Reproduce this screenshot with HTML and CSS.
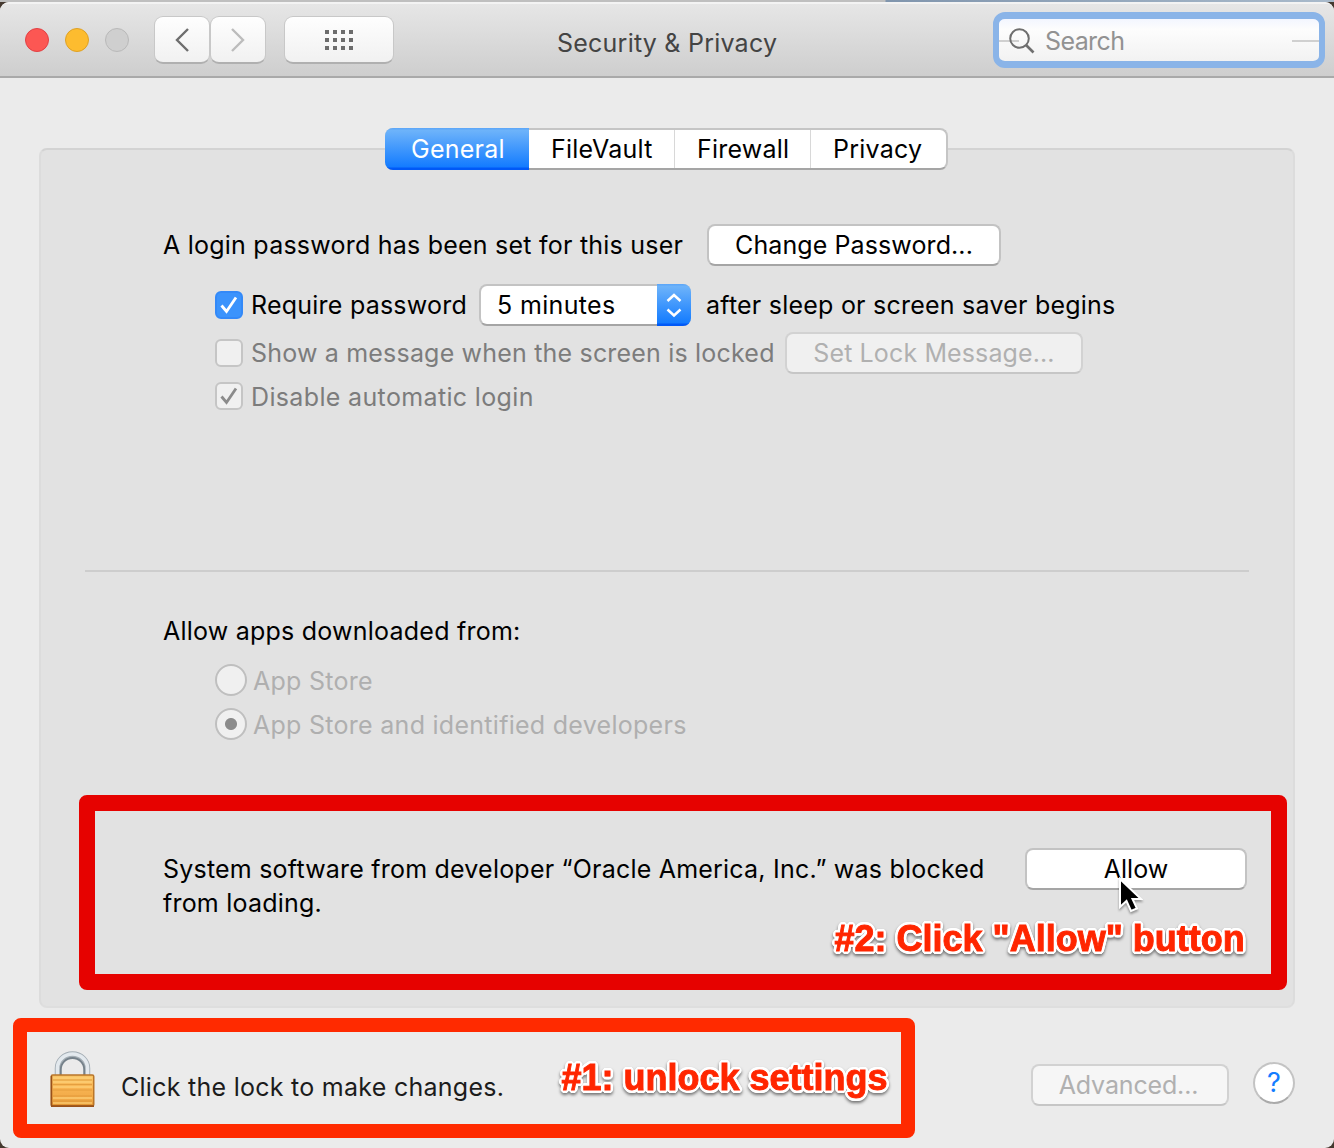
FILE: index.html
```html
<!DOCTYPE html>
<html lang="en">
<head>
<meta charset="utf-8">
<title>Security &amp; Privacy</title>
<link rel="stylesheet" href="styles.css">
</head>
<body>
<div class="desktop-strip"></div>
<div class="window">
  <header class="titlebar">
    <div class="lights"><i class="light red"></i><i class="light amber"></i><i class="light off"></i></div>
    <div class="nav">
      <button class="tool"><svg width="16" height="26" viewBox="0 0 16 26"><path d="M14 2 3 13 14 24" fill="none" stroke="#6e6e6e" stroke-width="2.4"/></svg></button>
      <button class="tool"><svg width="16" height="26" viewBox="0 0 16 26"><path d="M2 2 13 13 2 24" fill="none" stroke="#bcbcbc" stroke-width="2.4"/></svg></button>
    </div>
    <button class="tool grid"><svg width="28" height="20" viewBox="0 0 28 20" fill="#6c6c6c"><path d="M0 0h4v4H0zM8 0h4v4H8zM16 0h4v4h-4zM24 0h4v4h-4zM0 8h4v4H0zM8 8h4v4H8zM16 8h4v4h-4zM24 8h4v4h-4zM0 16h4v4H0zM8 16h4v4H8zM16 16h4v4h-4zM24 16h4v4h-4z"/></svg></button>
    <h1 class="title"><span>Security &amp; Privacy</span></h1>
    <div class="search">
      <svg width="26" height="27" viewBox="0 0 26 27" fill="none" stroke="#6f6f6f" stroke-width="2"><circle cx="10.5" cy="10.5" r="9.3"/><path d="M17 17l7.5 7.5" stroke-width="2.6"/></svg>
      <span>Search</span>
    </div>
  </header>
  <main class="content">
    <section class="panel">
      <nav class="tabs">
        <div class="tab active"><span>General</span></div>
        <div class="tab filevault"><span>FileVault</span></div>
        <div class="tab firewall"><span>Firewall</span></div>
        <div class="tab privacy"><span>Privacy</span></div>
      </nav>
      <div class="row login"><span>A login password has been set for this user</span><button class="btn change"><span>Change Password...</span></button></div>
      <div class="row option require">
        <i class="check on"><svg width="28" height="28" viewBox="0 0 28 28"><path d="M6.500 14.500l5 6L21 6.500" fill="none" stroke="#fff" stroke-width="2.800"/></svg></i>
        <span class="label">Require password</span>
        <div class="popup"><span>5 minutes</span><i class="arrows"><svg width="34" height="42" viewBox="0 0 34 42"><path d="M10.500 17 17 11l6.500 6M10.500 25.500 17 31.500l6.500-6" fill="none" stroke="#fff" stroke-width="2.500"/></svg></i></div>
        <span>after sleep or screen saver begins</span>
      </div>
      <div class="row option message dim"><i class="check"></i><span class="label">Show a message when the screen is locked</span><button class="btn disabled lockmsg"><span>Set Lock Message...</span></button></div>
      <div class="row option auto dim"><i class="check"><svg width="28" height="28" viewBox="0 0 28 28"><path d="M6.500 14.500l5 6L21 6.500" fill="none" stroke="#8b8b8b" stroke-width="2.800"/></svg></i><span class="label">Disable automatic login</span></div>
      <hr class="rule">
      <div class="row allowfrom"><span>Allow apps downloaded from:</span></div>
      <div class="row option store faded"><i class="radio"></i><span class="rlabel">App Store</span></div>
      <div class="row option faded"><i class="radio selected"></i><span class="rlabel">App Store and identified developers</span></div>
      <div class="callout blocked">
        <p class="blocked-text"><span>System software from developer “Oracle America, Inc.” was blocked</span><br><span>from loading.</span></p>
        <button class="btn allow"><span>Allow</span></button>
        <strong class="note note-allow">#2: Click "Allow" button</strong>
        <svg class="cursor" width="26" height="38" viewBox="0 0 26 38"><path d="M3 2v28l6.500-6 4.500 10 6-2.500-4.500-9.500H24z" fill="#000" stroke="#fff" stroke-width="2"/></svg>
      </div>
    </section>
    <footer class="footer">
      <div class="callout unlock">
        <svg class="lock" width="46" height="58" viewBox="0 0 46 58">
          <defs><linearGradient id="brass" x1="0" y1="0" x2="0" y2="1"><stop offset="0" stop-color="#f8c668"/><stop offset=".4" stop-color="#f8b452"/><stop offset=".8" stop-color="#f0a846"/><stop offset="1" stop-color="#e0922f"/></linearGradient></defs>
          <path d="M8 25V18.500a14.500 14 0 0 1 29 0V25" fill="none" stroke="#a3adb4" stroke-width="6.500"/>
          <path d="M7.500 25V18a15 14 0 0 1 30 0v7" fill="none" stroke="#e3e9ee" stroke-width="3.600"/>
          <path d="M10.800 25V19.500a11.700 11.500 0 0 1 23.400 0V25" fill="none" stroke="#75818a" stroke-width="1.800"/>
          <rect x="1.250" y="25" width="42.500" height="31" rx="1.500" fill="url(#brass)" stroke="#b9762a" stroke-width="1.500"/>
          <path d="M3 30h39M3 34.500h39M3 40h39M3 46h39M3 51h39" stroke="#d98f31" stroke-width="1.200" opacity=".6"/>
          <path d="M3 28h39M3 32h39M3 37h39M3 48h39M3 53h39" stroke="#ffd47c" stroke-width="1.500" opacity=".8"/>
          <path d="M1.500 26v30" stroke="#99511a" stroke-width="1.500"/>
          <path d="M1 56.200h43" stroke="#99511a" stroke-width="1.800"/>
        </svg>
        <span>Click the lock to make changes.</span>
        <strong class="note note-unlock">#1: unlock settings</strong>
      </div>
      <button class="btn disabled advanced"><span>Advanced...</span></button>
      <button class="help">?</button>
    </footer>
  </main>
</div>
</body>
</html>
```
FILE: styles.css
```css
* { box-sizing: border-box; }
body { margin: 0; width: 1334px; height: 1148px; overflow: hidden; background: #45392f; color: #000; font: 25px/34px Inter, "Liberation Sans", sans-serif; letter-spacing: .23px; }
button { font: inherit; letter-spacing: inherit; color: inherit; padding: 0; margin: 0; }
span { white-space: nowrap; }
i { display: block; flex: none; }
svg { display: block; flex: none; }

.desktop-strip { position: relative; z-index: 1; height: 2px; background: linear-gradient(90deg, #bfbfbf 885px, #8095ad 886px, #a9bacb); }
.window { height: 1146px; background: #ebebeb; border-radius: 9px; overflow: hidden; display: flex; flex-direction: column; }

.titlebar { height: 76px; flex: none; display: flex; align-items: flex-start; border-top: 2px solid #f3f3f3; border-bottom: 2px solid #a9a9a9; background: linear-gradient(#e6e6e6, #cecece); padding: 0 9px 0 25px; }
.lights { display: flex; gap: 16px; margin-top: 24px; }
.light { width: 24px; height: 24px; border-radius: 50%; border: 1.5px solid; }
.red { background: #fc5753; border-color: #e24044; }
.amber { background: #fdbc2f; border-color: #dea125; }
.off { background: #cfcfcf; border-color: #b9b9b9; }
.nav { display: flex; margin: 12px 1px 0 25px; }
.tool { width: 56px; height: 48px; border: 1px solid #c8c8c8; border-bottom: 2px solid #b0b0b0; border-radius: 9px; background: linear-gradient(#fefefe, #f1f1f1); display: flex; align-items: center; justify-content: center; }
.tool.grid { width: 110px; margin: 12px 0 0 17px; }
.title { flex: 1; margin: 22px 0 0; padding-left: 163px; font: inherit; color: #444; }
.search { width: 332px; height: 56px; margin-top: 8px; border: 7px solid #8ab4e8; border-width: 7px 6px; border-radius: 12px; background: linear-gradient(90deg, #d0d0d0 20px, transparent 20px 293px, #d0d0d0 293px) 0 21px / 100% 2px no-repeat, linear-gradient(#f3f6ff, #fdfdfd 25%, #f2f2f2); display: flex; align-items: flex-start; padding: 9px 0 0 10px; gap: 10px; color: #929292; letter-spacing: -.6px; }
.search span { margin-top: -4px; }

.content { flex: 1; padding: 70px 39px 0; }
.panel { height: 860px; border: 2px solid #d8d8d8; border-color: #d3d3d3 #dcdcdc #dedede; border-radius: 8px; background: #e2e2e2; }
.tabs { display: flex; width: 563px; height: 42px; margin: -22px 0 0 344px; border: 2px solid #c5c5c5; border-bottom-color: #a5a5a5; border-radius: 8px; background: #fff; }
.tab { display: flex; align-items: center; border-left: 1px solid #d8d8d8; }
.tab.active { width: 144px; height: 42px; margin: -2px 0 0 -2px; border: 0; padding-left: 26px; color: #fff; border-radius: 8px 0 0 8px; background: linear-gradient(#5aa5f8, #6db3fa 6%, #147cff 92%, #0059f7 96%); }
.filevault { width: 145px; padding-left: 21px; border-left-color: transparent; }
.firewall { width: 136px; padding-left: 22px; }
.privacy { padding-left: 22px; }

.row { display: flex; align-items: center; height: 42px; padding-left: 122px; }
.login { margin-top: 54px; }
.option { padding-left: 174px; }
.require { margin-top: 18px; }
.message { margin-top: 6px; }
.auto { margin-top: 1px; letter-spacing: .35px; }
.auto .label { margin-top: 2px; }
.dim { color: #7c7c7c; }
.faded { color: #afafaf; height: 44px; letter-spacing: .28px; }
.label { width: 228px; padding-left: 8px; }
.btn { height: 42px; flex: none; display: flex; align-items: center; justify-content: center; border: 2px solid #c3c3c3; border-bottom-color: #a5a5a5; border-radius: 8px; background: #fff; }
.btn.disabled { color: #b0b0b0; background: #f0f0f0; border-color: #d2d2d2; border-bottom-color: #c6c6c6; }
.change { width: 294px; margin-left: auto; margin-right: 292px; letter-spacing: .1px; }
.check { width: 28px; height: 28px; border: 2px solid #c5c5c5; border-radius: 6px; background: #f0f0f0; }
.check svg { margin: -2px; }
.check.on { background: #3b93fc; border-color: #3389f8; }
.popup { width: 212px; height: 42px; margin: 0 15px 0 8px; display: flex; justify-content: space-between; align-items: center; flex: none; border: 2px solid #c3c3c3; border-bottom-color: #a5a5a5; border-radius: 8px; background: #fff; padding-left: 16px; letter-spacing: .35px; }
.arrows { width: 34px; height: 42px; margin-right: -2px; border-radius: 0 8px 8px 0; background: linear-gradient(#5aa5f8, #6db3fa 6%, #147cff 92%, #0059f7 96%); }
.message .label { width: 542px; letter-spacing: .19px; }
.lockmsg { width: 298px; letter-spacing: .12px; }
.rule { height: 2px; border: 0; background: #cdcdcd; margin: 153px 44px 0; }
.allowfrom { margin-top: 38px; }
.store { margin-top: 6px; }
.radio { width: 32px; height: 32px; border-radius: 50%; border: 2px solid #bfbfbf; background: #f0f0f0; }
.radio.selected { background: radial-gradient(circle, #8b8b8b 5.5px, #f0f0f0 6.5px); }
.rlabel { padding-left: 6px; margin-top: 2px; }

.callout { position: relative; display: flex; border-radius: 8px; }
.blocked { width: 1208px; height: 195px; margin: 49px 0 0 38px; border: 16px solid #e60200; padding: 41px 24px 0 68px; justify-content: space-between; align-items: flex-start; }
.blocked-text { margin: 0; letter-spacing: .21px; }
.allow { width: 222px; margin-top: -4px; letter-spacing: 0; }
.cursor { position: absolute; left: 1022px; top: 66px; filter: drop-shadow(0 2px 1px rgb(0 0 0 / .35)); }
.note { position: absolute; color: #ff2600; font: bold 36px/42px "Liberation Sans", sans-serif; letter-spacing: 0; white-space: nowrap; -webkit-text-stroke: .9px #ff2600; filter: drop-shadow(0 2px 1.5px rgb(0 0 0 / .5));
  text-shadow: 3px 0 #fff, 2.8px 1.1px #fff, 2.1px 2.1px #fff, 1.1px 2.8px #fff, 0 3px #fff, -1.1px 2.8px #fff, -2.1px 2.1px #fff, -2.8px 1.1px #fff, -3px 0 #fff, -2.8px -1.1px #fff, -2.1px -2.1px #fff, -1.1px -2.8px #fff, 0 -3px #fff, 1.1px -2.8px #fff, 2.1px -2.1px #fff, 2.8px -1.1px #fff; }
.note-allow { left: 739.5px; top: 107px; }
.note-unlock { left: 534.5px; top: 25px; }

.footer { display: flex; align-items: flex-start; margin: 10px 0 0 -26px; }
.unlock { width: 902px; height: 120px; border: 14px solid #ff2a00; padding: 18px 0 0 23px; }
.unlock > span { margin: 20px 0 0 25px; color: #1c1c1c; letter-spacing: .27px; }
.advanced { width: 198px; margin: 46px 0 0 116px; letter-spacing: -.15px; padding-right: 3px; }
.btn.advanced { background: #f6f6f6; }
.help { width: 42px; height: 42px; margin: 44px 0 0 24px; border: 2px solid #c3c3c3; border-bottom-color: #aaa; border-radius: 50%; background: #fff; color: #147dff; font-size: 27px; line-height: 38px; }
```
